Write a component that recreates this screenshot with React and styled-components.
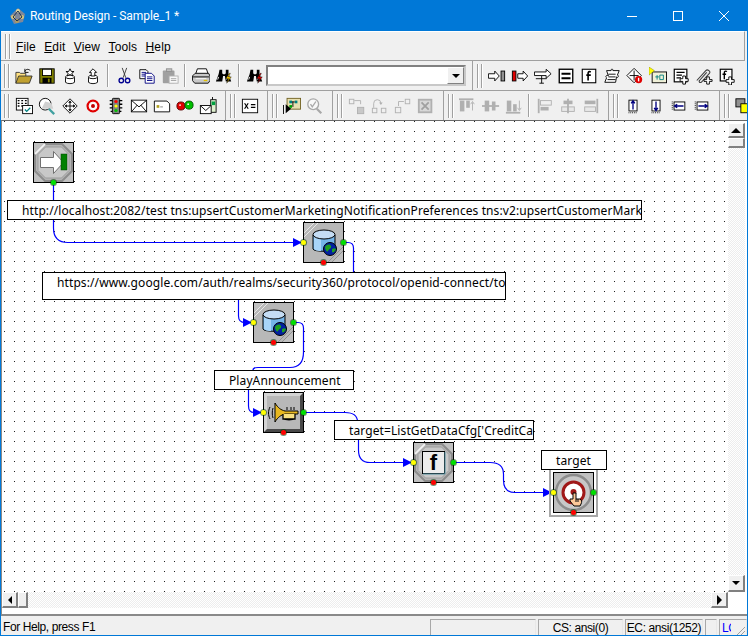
import React from 'react';
import styled, { createGlobalStyle } from 'styled-components';

const OX = 2;
const OY = 121;

const GlobalStyle = createGlobalStyle`
  html, body { margin: 0; padding: 0; background: #f0f0f0; }
  body { font-family: "Liberation Sans", Arial, sans-serif; font-size: 12px; color: #000; }
`;

const Window = styled.div`
  box-sizing: border-box;
  width: 748px;
  height: 636px;
  display: flex;
  flex-direction: column;
  border: 1px solid #0078d7;
  border-top: 0;
  background: #f0f0f0;
  overflow: hidden;
`;

const TitleBar = styled.div`
  height: 31px;
  flex: none;
  display: flex;
  align-items: center;
  background: #0078d7;
  color: #fff;
`;

const AppIcon = styled.div`
  width: 16px;
  height: 16px;
  margin: 0 4px 0 9px;
  display: flex;
`;

const Title = styled.div`
  flex: 1;
  font-family: Roboto, sans-serif;
  font-size: 12px;
  letter-spacing: -0.05px;
`;

const WinButton = styled.div`
  width: 46px;
  height: 31px;
  display: flex;
  align-items: center;
  justify-content: center;
`;

const MenuBand = styled.div`
  height: 30px;
  flex: none;
  box-sizing: border-box;
  display: flex;
  align-items: center;
  margin-right: 2px;
  padding: 1px 0 0 4px;
  border-top: 1px solid #fff;
  border-bottom: 1px solid #a0a0a0;
  border-right: 1px solid #a0a0a0;
`;

const Gripper = styled.div`
  width: 6px;
  height: ${p => p.$h || 24}px;
  flex: none;
  margin-right: 2px;
  background: linear-gradient(90deg, #a0a0a0 1px, #fff 1px, #fff 2px, transparent 2px, transparent 4px, #a0a0a0 4px, #a0a0a0 5px, #fff 5px);
`;

const MenuList = styled.div`
  display: flex;
  gap: 8.5px;
  margin-left: 3px;
`;

const MenuItem = styled.div`
  font-family: "Liberation Sans", sans-serif;
  font-size: 12px;
  letter-spacing: 0.1px;
  u { text-underline-offset: 1px; }
`;

const ToolRow = styled.div`
  height: ${p => p.$h}px;
  flex: none;
  box-sizing: border-box;
  display: flex;
  align-items: stretch;
  border-bottom: ${p => (p.$line ? '1px solid #a0a0a0' : 'none')};
`;

const Band = styled.div`
  display: flex;
  align-items: center;
  padding: 0 6px 0 ${p => p.$first ? 3 : 4}px;
  border-right: 1px solid #a0a0a0;
  &:last-child { border-right: 0; padding-right: 0; }
`;

const ToolButton = styled.div`
  width: 23px;
  height: 22px;
  flex: none;
  display: flex;
  align-items: center;
  justify-content: center;
`;

const Sep = styled.div`
  width: 8px;
  height: 23px;
  flex: none;
  position: relative;
  &::after {
    content: '';
    position: absolute;
    left: 3px;
    top: 0;
    bottom: 0;
    width: 1px;
    background: #a0a0a0;
    box-shadow: 1px 0 0 #fff;
  }
`;

const Combo = styled.div`
  box-sizing: border-box;
  width: 200px;
  height: 21px;
  flex: none;
  display: flex;
  justify-content: flex-end;
  background: #fff;
  border: 2px solid #808080;
  border-right-color: #c8c8c8;
  border-bottom-color: #c8c8c8;
`;

const ComboButton = styled.div`
  box-sizing: border-box;
  width: 17px;
  display: flex;
  align-items: center;
  justify-content: center;
  background: #f0f0f0;
  border: 1px solid #fff;
  border-right-color: #808080;
  border-bottom-color: #808080;
`;

const Arrow = styled.span`
  width: 0;
  height: 0;
  border-style: solid;
  border-color: transparent;
  ${p => p.$dir === 'up' && 'border-width: 0 5px 5px; border-bottom-color: #000;'}
  ${p => p.$dir === 'down' && 'border-width: 4px 4px 0; border-top-color: #000;'}
  ${p => p.$dir === 'left' && 'border-width: 4px 4px 4px 0; border-right-color: #000;'}
  ${p => p.$dir === 'right' && 'border-width: 5px 0 5px 5px; border-left-color: #000;'}
`;

const WorkArea = styled.div`
  height: 494px;
  flex: none;
  display: grid;
  grid-template-columns: 726px 17px 1fr;
  grid-template-rows: 471px 16px 1fr;
  box-sizing: border-box;
  background: #fff;
  border-top: 1px solid #696969;
  border-left: 1px solid #8a8a8a;
`;

const Canvas = styled.div`
  position: relative;
  overflow: hidden;
  background-color: #fff;
  background-image: linear-gradient(#fff 9px, transparent 9px), linear-gradient(90deg, #fff 9px, #222 9px);
  background-size: 10px 10px;
  background-position: 3px 1px;
`;

const VBar = styled.div`
  display: flex;
  flex-direction: column;
  padding-top: 2px;
`;

const HBar = styled.div`
  display: flex;
`;

const Track = styled.div`
  flex: 1;
  background: repeating-conic-gradient(#ededed 0 25%, #fff 0 50%) 0 0 / 2px 2px;
`;

const ScrollButton = styled.div`
  box-sizing: border-box;
  width: ${p => p.$w || 17}px;
  height: ${p => p.$h || 16}px;
  flex: none;
  display: flex;
  align-items: center;
  justify-content: center;
  background: #f0f0f0;
  border: 1px solid #fff;
  border-right: 2px solid #808080;
  border-bottom: 2px solid #808080;
`;

const Connectors = styled.svg`
  position: absolute;
  left: 0;
  top: 0;
`;

const Label = styled.div`
  position: absolute;
  left: ${p => p.$x - OX}px;
  top: ${p => p.$y - OY}px;
  width: ${p => p.$w}px;
  height: ${p => p.$h}px;
  box-sizing: border-box;
  padding: 1px 0 0 14px;
  background: #fff;
  border: 1px solid #000;
  overflow: hidden;
  white-space: nowrap;
  font-family: "Noto Sans", sans-serif;
  font-size: 12px;
  letter-spacing: 0.1px;
  line-height: 18px;
`;

const Node = styled.div`
  position: absolute;
  left: ${p => p.$x - OX}px;
  top: ${p => p.$y - OY}px;
  width: 41px;
  height: 41px;
  box-sizing: border-box;
  background: #c0c0c0;
  border: 1px solid #000;
  display: flex;
  ${p => p.$selected && 'box-shadow: 0 0 0 2px #fff, 0 0 0 4px #a8a8a8;'}
`;

const PORT_COLORS = { in: '#ffff00', out: '#00e000', err: '#ff0000' };

const Port = styled.span`
  position: absolute;
  width: 5px;
  height: 5px;
  border-radius: 50%;
  background: ${p => PORT_COLORS[p.$kind]};
  box-shadow: 0 0 0 1px rgba(0, 60, 0, 0.55);
  ${p => p.$kind === 'in' && 'left: -3px; top: 17px;'}
  ${p => p.$kind === 'out' && (p.$bottom ? 'left: 17px; bottom: -3px;' : 'right: -3px; top: 17px;')}
  ${p => p.$kind === 'err' && 'left: 17px; bottom: -3px;'}
`;

const StatusBar = styled.div`
  flex: 1;
  display: flex;
  align-items: stretch;
  padding-top: 3px;
  box-sizing: border-box;
  border-top: 2px solid #8a8a8a;
  font-family: "Liberation Sans", sans-serif;
  font-size: 12px;
  letter-spacing: -0.4px;
  gap: 2px;
`;

const StatusText = styled.div`
  flex: 1;
  padding: 1px 0 0 2px;
`;

const Panel = styled.div`
  box-sizing: border-box;
  width: ${p => p.$w}px;
  text-align: ${p => p.$left ? 'left' : 'center'};
  padding: 1px 0 0 ${p => p.$left ? 2 : 0}px;
  border: 1px solid #a8a8a8;
  border-bottom: 0;
  border-right-color: #e8e8e8;
  overflow: hidden;
  white-space: nowrap;
  color: ${p => p.$blue ? '#0000ff' : '#000'};
  position: relative;
`;

const LockText = styled.span`
  display: inline-block;
  width: 9px;
  overflow: hidden;
`;

const ResizeGrip = styled.svg`
  position: absolute;
  right: 0;
  bottom: 0;
`;

// ---- toolbar icons, drawn on a 20x20 grid ----
const I = ({ children }) => (
  <svg width="18" height="18" viewBox="0 0 20 20" fill="none">{children}</svg>
);

const open = (
  <I>
    <path d="M1 18V6h4l1 1h6v3" fill="#ffe080" stroke="#333" />
    <path d="M1 18l3-8h15l-3 8z" fill="#c0a030" stroke="#333" />
    <path d="M11 5c1-3 4-3 6-1" stroke="#000" />
    <path d="M11 2v4h4" stroke="#000" />
  </I>
);
const save = (
  <I>
    <rect x="2" y="2" width="16" height="16" fill="#808000" stroke="#000" />
    <rect x="5" y="2.500" width="10" height="7" fill="#fff" stroke="#000" />
    <rect x="5" y="12" width="10" height="6" fill="#000" />
    <rect x="11" y="13" width="2" height="4" fill="#808000" />
  </I>
);
const stampDown = (
  <I>
    <path d="M5 11v6c2 2 8 2 10 0v-6" fill="#fff" stroke="#000" />
    <ellipse cx="10" cy="11" rx="5" ry="2" fill="#fff" stroke="#000" />
    <path d="M10 2l1.500 3h3l-2.500 2 1 3-3-1.700-3 1.700 1-3-2.500-2h3z" fill="#fff" stroke="#000" />
  </I>
);
const stampUp = (
  <I>
    <path d="M5 11v6c2 2 8 2 10 0v-6" fill="#fff" stroke="#000" />
    <ellipse cx="10" cy="11" rx="5" ry="2" fill="#fff" stroke="#000" />
    <path d="M10 2l4 4h-2v4H8V6H6z" fill="#fff" stroke="#000" />
  </I>
);
const cut = (
  <I>
    <path d="M8 1l4 11M13 1l-4 11" stroke="#333" />
    <circle cx="7" cy="15" r="2.500" stroke="#000090" strokeWidth="1.500" />
    <circle cx="14" cy="15" r="2.500" stroke="#000090" strokeWidth="1.500" />
  </I>
);
const copy = (
  <I>
    <path d="M2 3h7l2 2v8H2z" fill="#fff" stroke="#000" />
    <path d="M4 6h5M4 8h5M4 10h5" stroke="#000080" />
    <path d="M8 7h7l3 3v8H8z" fill="#fff" stroke="#000080" />
    <path d="M10 11h6M10 13h6M10 15h6" stroke="#000080" />
  </I>
);
const paste = (
  <I>
    <rect x="2" y="4" width="13" height="14" rx="1" fill="#a0a0a0" />
    <rect x="6" y="2" width="6" height="3" fill="#c0c0c0" stroke="#909090" />
    <rect x="9" y="10" width="10" height="8" fill="#f8f8f8" stroke="#b0b0b0" />
    <path d="M11 13h6M11 15h6" stroke="#a0a0a0" />
  </I>
);
const print = (
  <I>
    <path d="M6 2h10l2 6H4z" fill="#fff" stroke="#000" />
    <path d="M0.500 10l3-3h15l1.500 3v5l-2 3H3l-2.500-3z" fill="#c8c8c8" stroke="#000" />
    <path d="M1 11h18" stroke="#000" />
    <path d="M4 13h12" stroke="#fff" />
    <path d="M13 15h4" stroke="#e0c000" strokeWidth="1.500" />
  </I>
);
const binoc = bolt => (
  <I>
    <path d="M5 3h3v4l1 1h2l1-1V3h3v5l3 8h-6l-1-6H9l-1 6H1l3-8z" fill="#000" />
    <path d="M4 11l-1 3M14 11l-1 3" stroke="#fff" />
    <path d="M16 7l-4 6h3l-2 5 5-7h-3l2-4z" fill={bolt} stroke="#000" strokeWidth="0.500" />
  </I>
);
const gridCheck = (
  <I>
    <rect x="1.500" y="1.500" width="13" height="13" fill="#fff" stroke="#000" />
    <path d="M3 4h2M7 4h2M11 4h2M3 7h2M7 7h2M11 7h2M3 10h2M7 10h2" stroke="#000" strokeWidth="1.500" />
    <rect x="8.500" y="9.500" width="11" height="9" fill="#fff" stroke="#000" />
    <path d="M11 14l2 2 4-4" stroke="#008080" strokeWidth="1.500" />
  </I>
);
const magnify = (
  <I>
    <circle cx="8" cy="8" r="6.500" fill="#fff" stroke="#000" />
    <path d="M4 13l4-8 7 2 2 6z" fill="#d0d0d0" />
    <path d="M12 13l6 6" stroke="#40a0a0" strokeWidth="2.500" />
  </I>
);
const diamond = (
  <I>
    <path d="M10 2L18 10 10 18 2 10z" fill="#fff" stroke="#000" />
    <path d="M10 5v10M5 10h10" stroke="#000" />
    <path d="M10 4l2 2.500H8zM10 16l2-2.500H8zM4 10l2.500-2v4zM16 10l-2.500-2v4z" fill="#000" />
  </I>
);
const target = (
  <I>
    <circle cx="10" cy="10" r="6" fill="#fff" stroke="#e00000" strokeWidth="2.500" />
    <circle cx="10" cy="10" r="2.200" fill="#c00000" />
    <circle cx="10" cy="10" r="4.200" stroke="#f0f0f0" />
  </I>
);
const traffic = (
  <I>
    <rect x="6" y="1.500" width="8" height="17" rx="1" fill="#808080" stroke="#000" />
    <path d="M3 4h3M3 8h3M3 12h3M14 4h3M14 8h3M14 12h3M4 16h2M14 16h2" stroke="#000" strokeWidth="1.500" />
    <circle cx="10" cy="5" r="1.800" fill="#ff0000" />
    <circle cx="10" cy="10" r="1.800" fill="#ffff00" />
    <circle cx="10" cy="15" r="1.800" fill="#00c000" />
  </I>
);
const mail = (
  <I>
    <rect x="1.500" y="3.500" width="17" height="13" fill="#fff" stroke="#000" />
    <path d="M2 4l8 7 8-7M2 16l6-7M18 16l-6-7" stroke="#000" />
  </I>
);
const card = (
  <I>
    <path d="M1.500 4.500h14l3 3v9h-17z" fill="#fff" stroke="#000" />
    <rect x="4" y="9" width="3" height="3" fill="#b0a020" />
    <path d="M8 11h3" stroke="#808080" />
  </I>
);
const redGreen = (
  <I>
    <circle cx="5.500" cy="10" r="4.500" fill="#e00000" stroke="#500" />
    <circle cx="14.500" cy="9" r="4.500" fill="#00c000" stroke="#050" />
    <circle cx="4.500" cy="9" r="1" fill="#fff" />
    <circle cx="13.500" cy="8" r="1" fill="#fff" />
  </I>
);
const phoneMail = (
  <I>
    <rect x="13" y="3" width="6" height="14" fill="#e0f0d0" stroke="#000" />
    <rect x="14" y="5" width="4" height="4" fill="#00a040" />
    <path d="M15 3V0" stroke="#000" />
    <rect x="1.500" y="9.500" width="12" height="9" fill="#fff" stroke="#000" />
    <path d="M2 10l5.500 5L13 10" stroke="#000" />
  </I>
);
const xEquals = (
  <I>
    <rect x="1.500" y="2.500" width="17" height="15" fill="#fff" stroke="#000" />
    <path d="M4 7l4 6M8 7l-4 6" stroke="#000" strokeWidth="1.300" />
    <path d="M11 8.500h5M11 11.500h5" stroke="#000" strokeWidth="1.300" />
  </I>
);
const flowPlay = (
  <I>
    <rect x="4.500" y="1.500" width="15" height="12" fill="#e8e0b0" stroke="#706020" />
    <rect x="7" y="4" width="3" height="3" fill="#008080" />
    <rect x="13" y="4" width="3" height="3" fill="#008080" />
    <rect x="7" y="9" width="3" height="3" fill="#00a000" />
    <path d="M10 5.500h3M11 5v6" stroke="#000" />
    <path d="M0 9v10" stroke="#000" strokeWidth="2" />
    <path d="M3 8l6 5-6 5z" fill="#000" />
  </I>
);
const magnifyGrey = (
  <I>
    <circle cx="8" cy="8" r="6" stroke="#a8a8a8" strokeWidth="1.500" fill="#f8f8f8" />
    <path d="M5 8l2 3 4-6" stroke="#a8a8a8" strokeWidth="1.500" />
    <path d="M12 13l5 5" stroke="#a8a8a8" strokeWidth="2.500" />
  </I>
);
const G = '#b0b0b0';
const routeA = (
  <I>
    <rect x="1.500" y="2.500" width="5" height="5" stroke={G} />
    <path d="M7 4h7v4" stroke={G} />
    <rect x="10.500" y="11.500" width="7" height="7" fill="#c8c8c8" stroke={G} />
  </I>
);
const routeB = (
  <I>
    <path d="M3 12V7a4 4 0 0 1 8 0" stroke={G} />
    <rect x="1.500" y="12.500" width="5" height="5" stroke={G} />
    <rect x="11.500" y="12.500" width="5" height="5" stroke={G} />
    <path d="M9 6h4l-2 3z" fill={G} />
  </I>
);
const routeC = (
  <I>
    <rect x="1.500" y="11.500" width="6" height="6" stroke={G} />
    <path d="M5 10V5h6" stroke={G} />
    <rect x="12.500" y="2.500" width="5" height="5" stroke={G} />
  </I>
);
const deleteGrey = (
  <I>
    <rect x="2" y="3" width="14" height="14" fill="#d8d8d8" stroke={G} strokeWidth="2" />
    <path d="M5 6l8 8M13 6l-8 8" stroke="#a0a0a0" strokeWidth="2" />
  </I>
);
const alignTop = (
  <I>
    <path d="M0 2.500h16" stroke={G} strokeWidth="2" />
    <rect x="1" y="4" width="5" height="12" fill={G} />
    <rect x="8" y="4" width="4" height="8" fill={G} />
    <path d="M15 15V6M13 8l2-3 2 3" stroke={G} />
  </I>
);
const alignMid = (
  <I>
    <rect x="3" y="4" width="5" height="12" fill={G} />
    <rect x="11" y="5" width="4" height="10" fill={G} />
    <path d="M0 10h19" stroke={G} strokeWidth="2" />
  </I>
);
const alignBottom = (
  <I>
    <path d="M1 17.500h16" stroke={G} strokeWidth="2" />
    <rect x="2" y="4" width="5" height="12" fill={G} />
    <rect x="9" y="8" width="4" height="8" fill={G} />
    <path d="M16 4v10M14 12l2 3 2-3" stroke={G} />
  </I>
);
const alignLeft = (
  <I>
    <path d="M3 2v16" stroke={G} strokeWidth="2" />
    <rect x="5" y="4" width="12" height="5" fill="#f0f0f0" stroke={G} />
    <rect x="5" y="11" width="9" height="4" fill={G} />
  </I>
);
const alignCenter = (
  <I>
    <rect x="5" y="4" width="10" height="4" fill={G} />
    <rect x="3" y="11" width="14" height="5" fill="#e8e8e8" stroke={G} />
    <path d="M10 2v16" stroke={G} strokeWidth="2" />
  </I>
);
const alignRight = (
  <I>
    <path d="M17 2v16" stroke={G} strokeWidth="2" />
    <rect x="3" y="4" width="12" height="4" fill={G} />
    <rect x="3" y="11" width="12" height="5" fill="#e8e8e8" stroke={G} />
  </I>
);
const sizeBox = (rot, flip) => (
  <I>
    <g transform={`rotate(${rot} 10 10)`}>
      <rect x="5.500" y="3.500" width="9" height="12" fill="#fff" stroke="#000" />
      <path d="M10 5v9M8 7l2-3 2 3" stroke="#000080" strokeWidth="1.500" transform={flip ? 'rotate(180 10 9.500)' : undefined} />
      <path d="M5 17.500h10" stroke="#000" strokeDasharray="1 1" />
    </g>
  </I>
);
const toFront = (
  <I>
    <rect x="1" y="2" width="10" height="9" fill="#909090" stroke="#000" />
    <rect x="6.500" y="7.500" width="13" height="10" fill="#ffff00" stroke="#000" />
  </I>
);
const arrowOut = (
  <I>
    <path d="M0.500 7.500h7v-3l5 5.500-5 5.500v-3h-7z" fill="#fff" stroke="#000" />
    <rect x="14.500" y="4.500" width="4" height="11" fill="#909090" stroke="#000" />
  </I>
);
const barIn = (
  <I>
    <rect x="1.500" y="4.500" width="4" height="11" fill="#e00000" stroke="#000" />
    <path d="M7.500 7.500h6v-3l5 5.500-5 5.500v-3h-6z" fill="#fff" stroke="#000" />
  </I>
);
const split = (
  <I>
    <path d="M0.500 5.500h13v-3l5.500 5-5.500 5v-3h-13z" fill="#fff" stroke="#000" />
    <path d="M2 13h12M8.500 10v8M6 18h5" stroke="#000" />
  </I>
);
const equalsBox = (
  <I>
    <rect x="2.500" y="2.500" width="15" height="15" fill="#fff" stroke="#000" strokeWidth="1.500" />
    <path d="M5 7.500h10M5 12.500h10" stroke="#000" strokeWidth="2" />
  </I>
);
const fBox = (
  <I>
    <rect x="2.500" y="2.500" width="15" height="15" fill="#fff" stroke="#000" strokeWidth="1.200" />
    <path d="M12 5.500c-2-1-3 0-3 1.500v8M7 9h5" stroke="#000" strokeWidth="1.800" />
  </I>
);
const puzzle = (
  <I>
    <path d="M4 4h5c-1-2 3-2 2 0h7l-2 5c2 0 1 4-1 2l-1 6H2l2-5c-2-1 0-4 2-2z" fill="#fff" stroke="#000" />
    <path d="M6 8h8M6 11h8M5 14h9" stroke="#000" />
  </I>
);
const diamondRed = (
  <I>
    <path d="M9 1.500L17 9.500 9 17.500 1 9.500z" fill="#fff" stroke="#000" />
    <path d="M9 4v11M4 9.500h10" stroke="#000" />
    <circle cx="14" cy="14" r="4" fill="#e00000" />
    <path d="M14 12v4" stroke="#fff" strokeWidth="1.500" />
  </I>
);
const flagBox = (
  <I>
    <rect x="3.500" y="5.500" width="16" height="12" fill="#f0f0d8" stroke="#000" />
    <path d="M0 0l6 4-6 5z" fill="#ffff00" stroke="#808000" strokeWidth="0.500" />
    <path d="M7 11h4M9 9v5M12 9h4v5h-4z" stroke="#008080" />
  </I>
);
const lineAdd = (
  <I>
    <rect x="2.500" y="2.500" width="14" height="14" fill="#fff" stroke="#000" strokeWidth="1.300" />
    <path d="M5 6h9M5 9h6M5 12h5" stroke="#000" strokeWidth="1.300" />
    <path d="M12 10h3v3h3v3h-3v3h-3v-3H9v-3h3z" fill="#fff" stroke="#000" />
  </I>
);
const clipAdd = (
  <I>
    <path d="M2 15L12 4c2-2 6 1 4 3L7 17c-2 1-3-1-2-2l8-9" stroke="#404040" strokeWidth="1.200" fill="#e8e8e8" />
    <path d="M13 11h3v3h3v2h-3v3h-3v-3h-3v-2h3z" fill="#fff" stroke="#000" />
  </I>
);
const fAdd = (
  <I>
    <rect x="2.500" y="2.500" width="13" height="13" fill="#fff" stroke="#000" strokeWidth="1.300" />
    <path d="M10 5c-2-1-3 0-3 1.500v7M5 8h4" stroke="#000" strokeWidth="1.500" />
    <path d="M12 11h3v3h3v3h-3v3h-3v-3H9v-3h3z" fill="#fff" stroke="#000" />
  </I>
);

const Tools = ({ items }) => items.map((item, i) =>
  item === '|' ? <Sep key={i} /> : <ToolButton key={i}>{item}</ToolButton>
);

// ---- node artwork, 39x39 ----
const octagon = (
  <>
    <path d="M11 1h17l10 10v17L28 38H11L1 28V11z" fill="#b4b4b4" stroke="#8c8c8c" strokeWidth="2" />
    <path d="M11.500 4h16l7.500 7.500v16L27.500 35h-16L4 27.500v-16z" fill="#c8c8c8" stroke="#9c9c9c" />
    <path d="M1 11L11 1" stroke="#f4f4f4" strokeWidth="2" />
  </>
);
const chamfer = (
  <>
    <path d="M10 0h29v28l-11 11H0V10z" fill="#b8b8b8" />
    <path d="M10 0L0 10M14 0L0 14" stroke="#e8e8e8" />
    <path d="M39 28L28 39M39 24L24 39" stroke="#909090" />
  </>
);
const startArt = (
  <svg width="39" height="39" viewBox="0 0 39 39">
    {octagon}
    <path d="M6.500 14.500h13v-6l10 11-10 11v-6h-13z" fill="#fff" stroke="#707070" />
    <rect x="27" y="11" width="6" height="16" fill="#008000" stroke="#004000" strokeWidth="0.500" />
  </svg>
);
const dbArt = (
  <svg width="39" height="39" viewBox="0 0 39 39">
    {chamfer}
    <path d="M9 12v14c0 3 22 3 22 0V12z" fill="#74b4e8" stroke="#000" />
    <path d="M10 13v13c2 2 5 2 7 2V14z" fill="#a8d4f8" />
    <ellipse cx="20" cy="11.500" rx="11" ry="4.500" fill="#c4dcf4" stroke="#000" />
    <circle cx="26" cy="26" r="6.500" fill="#0020a0" stroke="#000" />
    <path d="M21 24c2-3 5-3 6-1s-2 3-3 5-3-2-3-4zM28 26c2-1 3-1 4 0-1 3-3 4-4 3z" fill="#20a020" />
  </svg>
);
const trumpetArt = (
  <svg width="39" height="39" viewBox="0 0 39 39">
    <rect x="0" y="0" width="39" height="39" fill="#b8b8b8" />
    <path d="M0 0h39l-3 3H3v33l-3 3z" fill="#d4d4d4" />
    <path d="M39 39H0l3-3h33V3l3-3z" fill="#484848" />
    <path d="M6 14c-2 4-2 8 0 12M9 15c-1 3-1 7 0 10" stroke="#000" fill="none" />
    <path d="M11 10c3 5 6 7 10 8h13v3H21c-4 1-7 3-10 8z" fill="#e8b820" stroke="#000" />
    <path d="M19 21v5h12v-5M19 26c2 1 10 1 12 0" stroke="#000" strokeWidth="1.300" fill="#f8e080" />
    <path d="M23 17v-3M27 17v-3M30 17v-3" stroke="#000" />
  </svg>
);
const fArt = (
  <svg width="39" height="39" viewBox="0 0 39 39">
    {octagon}
    <rect x="8.500" y="8.500" width="22" height="22" fill="#ececec" stroke="#000" />
    <path d="M31 9v22H9" stroke="#5090a0" fill="none" />
    <text x="19.500" y="27" textAnchor="middle" fontFamily="Liberation Sans, sans-serif" fontWeight="bold" fontSize="22">f</text>
  </svg>
);
const clickArt = (
  <svg width="39" height="39" viewBox="0 0 39 39">
    <circle cx="19.500" cy="19.500" r="17.500" fill="#c8c8c8" stroke="#8c8c8c" strokeWidth="2.500" />
    <circle cx="19.500" cy="19.500" r="10.500" fill="#fff" stroke="#a01818" strokeWidth="3" />
    <circle cx="19.500" cy="19" r="3" fill="#a01818" />
    <path d="M19 20h3v6h4c2 1 2 3 1 5l-1 2h-6l-4-5v-2h3z" fill="#fcc898" stroke="#000" />
    <path d="M22 26v3M24 26v3" stroke="#000" />
  </svg>
);

const NODES = [
  { x: 33, y: 142, art: startArt, ports: [['out', true]] },
  { x: 303, y: 222, art: dbArt, ports: [['in'], ['out'], ['err']] },
  { x: 253, y: 302, art: dbArt, ports: [['in'], ['out'], ['err']] },
  { x: 263, y: 392, art: trumpetArt, ports: [['in'], ['out'], ['err']] },
  { x: 413, y: 442, art: fArt, ports: [['in'], ['out'], ['err']] },
  { x: 553, y: 472, art: clickArt, selected: true, ports: [['in'], ['out'], ['err']] },
];

const LABELS = [
  { x: 7, y: 200, w: 635, h: 20, text: 'http://localhost:2082/test tns:upsertCustomerMarketingNotificationPreferences tns:v2:upsertCustomerMarketingNotificationPreferences' },
  { x: 42, y: 272, w: 464, h: 28, text: 'https://www.google.com/auth/realms/security360/protocol/openid-connect/token' },
  { x: 214, y: 370, w: 140, h: 20, text: 'PlayAnnouncement' },
  { x: 334, y: 420, w: 200, h: 20, text: "target=ListGetDataCfg['CreditCard']" },
  { x: 541, y: 450, w: 66, h: 20, text: 'target' },
];

const WIRES = [
  'M53.500 183V228Q53.500 242.500 68 242.500H296',
  'M343 242.500H348Q353.500 242.500 353.500 248V272',
  'M238.500 299V316Q238.500 322.500 245 322.500H246',
  'M293 322.500H298Q303.500 322.500 303.500 328V352Q303.500 367.500 290 367.500H258Q253 367.500 253 370',
  'M248.500 389V406Q248.500 412.500 254 412.500H256',
  'M303 412.500H345Q357.500 412.500 357.500 422',
  'M358.500 439V450Q358.500 462.500 370 462.500H406',
  'M453 462.500H490Q503.500 462.500 503.500 474V480Q503.500 492.500 515 492.500H546',
];

const HEADS = [[303, 242], [253, 322], [263, 412], [413, 462], [553, 492]];

const App = () => (
  <Window>
    <GlobalStyle />
    <TitleBar>
      <AppIcon>
        <svg width="16" height="16" viewBox="0 0 16 16">
          <path d="M8 0l7 6-2 8-9 2-4-8z" fill="#808898" />
          <circle cx="8" cy="3" r="2" fill="#e0d8a0" />
          <circle cx="3" cy="9" r="2" fill="#d8c880" />
          <circle cx="12" cy="9" r="2" fill="#d8c880" />
          <circle cx="7" cy="13" r="2" fill="#b0a060" />
          <path d="M8 3L3 9l4 4 5-4z" fill="none" stroke="#203050" />
        </svg>
      </AppIcon>
      <Title>Routing Design - Sample_1 *</Title>
      <WinButton>
        <svg width="10" height="10" viewBox="0 0 10 10"><path d="M0 5.500h10" stroke="#fff" /></svg>
      </WinButton>
      <WinButton>
        <svg width="10" height="10" viewBox="0 0 10 10"><rect x="0.500" y="0.500" width="9" height="9" fill="none" stroke="#fff" /></svg>
      </WinButton>
      <WinButton>
        <svg width="10" height="10" viewBox="0 0 10 10"><path d="M0 0l10 10M10 0L0 10" stroke="#fff" /></svg>
      </WinButton>
    </TitleBar>

    <MenuBand>
      <Gripper $h={25} />
      <MenuList>
        <MenuItem><u>F</u>ile</MenuItem>
        <MenuItem><u>E</u>dit</MenuItem>
        <MenuItem><u>V</u>iew</MenuItem>
        <MenuItem><u>T</u>ools</MenuItem>
        <MenuItem><u>H</u>elp</MenuItem>
      </MenuList>
    </MenuBand>

    <ToolRow $h={30} $line>
      <Band $first>
        <Gripper />
        <Tools items={[open, save, stampDown, stampUp, '|', cut, copy, paste, '|', print, binoc('#ffd000'), '|', binoc('#e00000')]} />
        <Combo><ComboButton><Arrow $dir="down" /></ComboButton></Combo>
      </Band>
      <Band>
        <Gripper />
        <Tools items={[arrowOut, barIn, split, equalsBox, fBox, puzzle, diamondRed, flagBox, lineAdd, clipAdd, fAdd]} />
      </Band>
    </ToolRow>

    <ToolRow $h={29}>
      <Band $first>
        <Gripper />
        <Tools items={[gridCheck, magnify, diamond, target, traffic, mail, card, redGreen, phoneMail]} />
      </Band>
      <Band>
        <Gripper />
        <Tools items={[xEquals]} />
      </Band>
      <Band>
        <Gripper />
        <Tools items={[flowPlay, magnifyGrey]} />
      </Band>
      <Band>
        <Gripper />
        <Tools items={[routeA, routeB, routeC, deleteGrey]} />
      </Band>
      <Band>
        <Gripper />
        <Tools items={[alignTop, alignMid, alignBottom, '|', alignLeft, alignCenter, alignRight]} />
      </Band>
      <Band>
        <Gripper />
        <Tools items={[sizeBox(0, false), sizeBox(0, true), sizeBox(90, true), sizeBox(90, false)]} />
      </Band>
      <Band>
        <Gripper />
        <Tools items={[toFront]} />
      </Band>
    </ToolRow>

    <WorkArea>
      <Canvas>
        <Connectors width="726" height="471" viewBox={`${OX} ${OY} 726 471`} fill="none">
          {WIRES.map((d, i) => <path key={i} d={d} stroke="#0000ff" strokeWidth="1.200" />)}
          {HEADS.map(([x, y]) => (
            <polygon key={x} points={`${x - 10},${y - 4} ${x - 1},${y + 0.5} ${x - 10},${y + 5}`} fill="#0000ff" />
          ))}
        </Connectors>
        {NODES.map(n => (
          <Node key={n.x} $x={n.x} $y={n.y} $selected={n.selected}>
            {n.art}
            {n.ports.map(([kind, bottom]) => <Port key={kind} $kind={kind} $bottom={bottom} />)}
          </Node>
        ))}
        {LABELS.map(l => (
          <Label key={l.x} $x={l.x} $y={l.y} $w={l.w} $h={l.h}>{l.text}</Label>
        ))}
      </Canvas>
      <VBar>
        <ScrollButton $h={15}><Arrow $dir="up" /></ScrollButton>
        <ScrollButton $h={10} />
        <Track />
        <ScrollButton $h={17}><Arrow $dir="down" /></ScrollButton>
      </VBar>
      <div />
      <HBar>
        <ScrollButton $w={16}><Arrow $dir="left" /></ScrollButton>
        <ScrollButton $w={10} />
        <Track />
        <ScrollButton $w={17}><Arrow $dir="right" /></ScrollButton>
      </HBar>
    </WorkArea>

    <StatusBar>
      <StatusText>For Help, press F1</StatusText>
      <Panel $w={106} />
      <Panel $w={85}>CS: ansi(0)</Panel>
      <Panel $w={78}>EC: ansi(1252)</Panel>
      <Panel $w={12} />
      <Panel $w={28} $left $blue>
        <LockText>LC</LockText>
        <ResizeGrip width="14" height="14" viewBox="0 0 14 14">
          <path d="M13 3L3 13M13 7L7 13M13 11l-2 2" stroke="#a0a0a0" />
        </ResizeGrip>
      </Panel>
    </StatusBar>
  </Window>
);

export default App;
